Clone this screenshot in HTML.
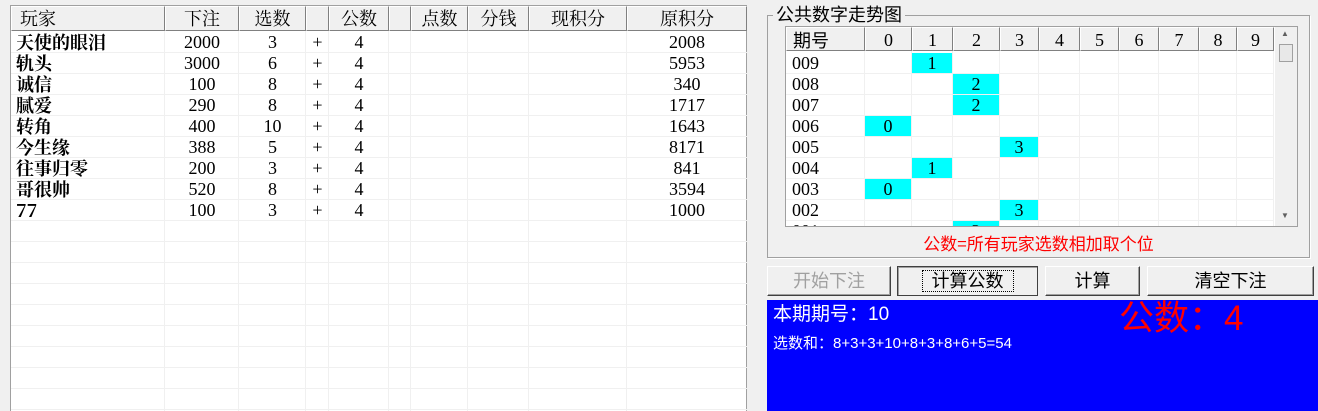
<!DOCTYPE html><html><head><meta charset="utf-8"><style>
*{margin:0;padding:0;box-sizing:border-box}
html,body{width:1318px;height:411px;overflow:hidden}
body{background:#f0f0f0;position:relative;font-family:"Liberation Serif","Noto Serif CJK SC",serif;font-size:18px;color:#000}
.a{position:absolute}
.lst{left:10px;top:5px;width:737px;height:406px;background:#fff;border:1px solid #a0a0a0;border-bottom:none}
.hd{position:absolute;top:0;height:25px;background:#f0f0f0;border:1px solid;border-color:#fff #808080 #808080 #fff;text-align:center;line-height:24px}
.vl{position:absolute;width:1px;background:#f0f0f0}
.hl{position:absolute;height:1px;background:#f0f0f0}
.c{position:absolute;text-align:center;line-height:21px;height:21px}
.cy{background:#0ff}
.btn{position:absolute;top:266px;height:30px;border:1px solid;border-color:#fff #404040 #404040 #fff;box-shadow:inset -1px -1px #a0a0a0;background:#f0f0f0;text-align:center;line-height:28px;font-family:"Liberation Sans","Noto Sans CJK SC",sans-serif;font-size:18px}
</style></head><body>
<div class="a lst" id="L"></div>
<div class="a" style="left:767px;top:15px;width:543px;height:243px;border:1px solid #a0a0a0;box-shadow:1px 1px #fff"></div>
<div class="a" style="left:773px;top:2px;background:#f0f0f0;padding:0 3px;font-family:'Noto Sans CJK SC',sans-serif;font-size:18px;line-height:24px">公共数字走势图</div>
<div class="a" style="left:785px;top:26px;width:513px;height:201px;background:#fff;border:1px solid #a0a0a0;overflow:hidden" id="G"></div>
<div class="a" style="left:767px;top:231px;width:543px;text-align:center;color:#f00;font-family:'Noto Sans CJK SC',sans-serif;font-size:17px;line-height:24px">公数=所有玩家选数相加取个位</div>
<div class="btn" style="left:767px;width:124px;color:#a0a0a0">开始下注</div>
<div class="btn" style="left:897px;width:141px;border-color:#404040;box-shadow:inset 1px 1px #a0a0a0"><span style="border:1px dotted #000;padding:0 9px">计算公数</span></div>
<div class="btn" style="left:1045px;width:95px">计算</div>
<div class="btn" style="left:1147px;width:167px">清空下注</div>
<div class="a" style="left:767px;top:300px;width:551px;height:111px;background:#00f;color:#fff;font-family:'Liberation Sans','Noto Sans CJK SC',sans-serif">
<div class="a" style="left:6px;top:2px;font-size:19px;line-height:26px">本期期号：10</div>
<div class="a" style="left:6px;top:33px;font-size:15px;line-height:22px">选数和：8+3+3+10+8+3+8+6+5=54</div>
<div class="a" style="left:352px;top:-2px;font-size:35px;line-height:42px;color:#f00">公数：4</div>
</div>
<script>
var L=document.getElementById('L'),h='';
var cols=[0,154,228,295,318,378,400,457,518,616,736];
var hn=['玩家','下注','选数','','公数','','点数','分钱','现积分','原积分'];
for(var i=0;i<10;i++){h+='<div class="hd" style="left:'+cols[i]+'px;width:'+(cols[i+1]-cols[i])+'px;'+(i==0?'text-align:left;padding-left:8px':'')+'">'+hn[i]+'</div>';}
for(var i=1;i<10;i++)h+='<div class="vl" style="left:'+(cols[i]-1)+'px;top:25px;height:400px"></div>';
for(var r=0;r<18;r++)h+='<div class="hl" style="left:0;width:736px;top:'+(46+r*21)+'px"></div>';
var d=[['天使的眼泪',2000,3,2008],['轨头',3000,6,5953],['诚信',100,8,340],['腻爱',290,8,1717],['转角',400,10,1643],['今生缘',388,5,8171],['往事归零',200,3,841],['哥很帅',520,8,3594],['77',100,3,1000]];
d.forEach(function(x,r){var t=26+r*21;
h+='<div class="c" style="left:5px;top:'+t+'px;text-align:left;font-family:\'Noto Serif CJK SC\',serif;font-weight:bold">'+x[0]+'</div>';
h+='<div class="c" style="left:154px;width:74px;top:'+t+'px">'+x[1]+'</div>';
h+='<div class="c" style="left:228px;width:67px;top:'+t+'px">'+x[2]+'</div>';
h+='<div class="c" style="left:295px;width:23px;top:'+t+'px">+</div>';
h+='<div class="c" style="left:318px;width:60px;top:'+t+'px">4</div>';
h+='<div class="c" style="left:616px;width:120px;top:'+t+'px">'+x[3]+'</div>';});
L.innerHTML=h;
var G=document.getElementById('G');h='';
var gc=[0,79,126,167,214,253,294,333,373,413,451,488];
var gn=['期号','0','1','2','3','4','5','6','7','8','9'];
for(var i=0;i<11;i++)h+='<div class="hd" style="height:24px;left:'+gc[i]+'px;width:'+(gc[i+1]-gc[i])+'px;'+(i==0?'text-align:left;padding-left:6px;font-family:\'Noto Sans CJK SC\',sans-serif':'')+'">'+gn[i]+'</div>';
for(var i=1;i<12;i++)h+='<div class="vl" style="left:'+(gc[i]-1)+'px;top:24px;height:180px"></div>';
for(var r=0;r<9;r++)h+='<div class="hl" style="left:0;width:488px;top:'+(46+r*21)+'px"></div>';
var v=[1,2,2,0,3,1,0,3,2];
v.forEach(function(x,r){var t=26+r*21;
h+='<div class="c" style="left:6px;top:'+t+'px">00'+(9-r)+'</div>';
h+='<div class="c cy" style="left:'+gc[x+1]+'px;width:'+(gc[x+2]-gc[x+1]-1)+'px;top:'+(t)+'px;height:20px;line-height:21px">'+x+'</div>';});
h+='<div class="a" style="left:489px;top:0;width:22px;height:199px;background:#f0f0f0"></div>';
h+='<div class="a" style="left:493px;top:17px;width:14px;height:18px;border:1px solid #a0a0a0;background:#e8e8e8"></div>';
h+='<div class="a" style="left:495px;top:2px;font-size:8px;color:#606060">▲</div><div class="a" style="left:495px;top:184px;font-size:8px;color:#606060">▼</div>';
G.innerHTML=h;
</script></body></html>
